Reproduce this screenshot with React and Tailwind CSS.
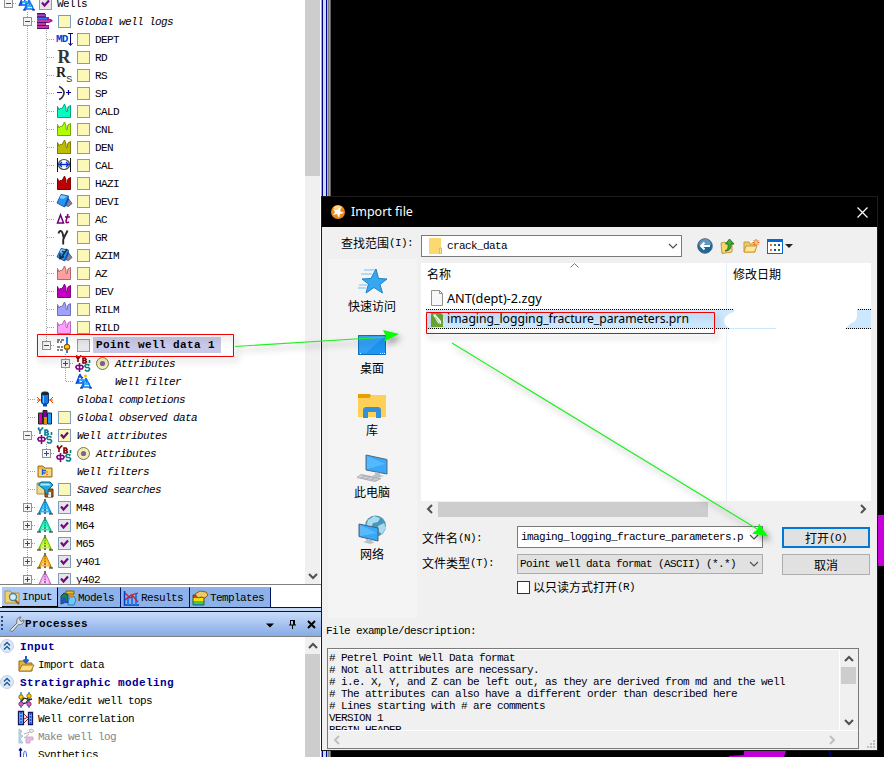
import React from "react";

const MONO = "font-['Liberation_Mono','Noto_Sans_CJK_SC',monospace] text-[11px] tracking-[-0.6px] whitespace-pre";
const MONO_BOLD = "font-['Liberation_Mono',monospace] font-bold text-[11px] tracking-[0.4px] whitespace-pre";
const CJK = "font-['Noto_Sans_CJK_SC',sans-serif] text-[12px] whitespace-pre";

/* ---------- tree icons (16 x 16) ---------- */

function Svg({ children, w = 16, h = 16 }) {
  return (
    <svg width={w} height={h} viewBox={`0 0 ${w} ${h}`} className="block shrink-0 overflow-visible">
      {children}
    </svg>
  );
}

function Spiky({ fill, stroke }) {
  return (
    <Svg>
      <path d="M1.500 14.500V3.500L3 7l1.500-2 1 1L7 4l1.500-3L10 5v3l1 1 1-5 2.500-1.500v12z" fill={fill} stroke={stroke} strokeWidth="1" />
    </Svg>
  );
}

function Derrick({ color, dark }) {
  return (
    <Svg>
      <path d="M8 4 14 14.500H2z" fill={color} opacity=".35" />
      <path d="M8 0v15" stroke="#111" strokeWidth="1.200" />
      <path d="M7.500 3 2 14.500M8.500 3l5.500 11.500" stroke={dark} strokeWidth="2" fill="none" />
      <path d="M5.500 7h5M4.500 9.500h7M3.500 12.500h9" stroke={color} strokeWidth="1.600" />
      <path d="M7.500 4 3.500 12.500M8.500 4l4 8.500" stroke={color} strokeWidth="1.200" fill="none" />
      <path d="M0 15h4M12 15h4" stroke="#111" />
    </Svg>
  );
}

function Derricks({ spark }) {
  return (
    <Svg w={17}>
      <path d="M5 1 1 11M5 1l4 10M2 7h7M3 4h4M2 10l6-6M1 10h8" stroke="#0a50e0" strokeWidth="1.400" fill="none" />
      <path d="M11 5 6 15M11 5l5 10M8 11h7M9 8h4M6 15l6-6M7 14h8" stroke="#0878f0" strokeWidth="1.400" fill="none" />
      <path d="M4 7h6M9 11h4" stroke="#35c0ff" strokeWidth="1.500" />
      <path d="M5 15h3M14 15h3" stroke="#001a70" />
      {spark && <path d="M10.500 1.500v3M9 3h3" stroke="#ffb800" strokeWidth="1.500" />}
    </Svg>
  );
}

function AttrIcon({ top }) {
  return (
    <Svg w={17} h={17}>
      <g fill="none" strokeWidth="1.600">
        <path d="M1 1l2 3M5.500 1 3 4v3M1 1h1.500M5 1h1.500" stroke={top} />
        <path d="M8 3v5h2.500l1-1-1-1.500H8h2l1-1-1-1.500z" stroke={top} />
        <path d="M14.500 5v3" stroke="#087f84" />
        <path d="M4.500 8v9M2 10.500h5l1 1v1l-1 1.500H2l-1-1.500v-1z" stroke="#80007f" />
        <path d="M14.500 10.500 13 9.500h-2l-1 1v1l1 1h2.500l1 1v1l-1 1.500h-2L10 15" stroke="#087f84" />
      </g>
    </Svg>
  );
}

function Prism({ arrow }) {
  return (
    <Svg w={17}>
      <path d="M12 5l4 5.500-3.500 3L8 12z" fill="#8080a0" stroke="#606078" />
      <path d="M5 1.500 12.500 3l-4 11L1 10z" fill="#2a93ec" stroke="#1560b8" />
      <path d="M5 2l6 1.500-4 2.500-3.500-1z" fill="#78caff" />
      <path d="M12.500 3.500l.5 3-3.500 7-1.500 0z" fill="#0b4fae" />
      {arrow && <path d="M11 2 5 11M4 6.500v5l4-2M6 4l3 2" stroke="#202830" strokeWidth="1.500" fill="none" />}
    </Svg>
  );
}

const LETTER = "w-4 h-4 shrink-0 leading-4 whitespace-nowrap";

const icons = {
  wells: <Derricks />,
  filter: <Derricks spark />,
  logs: (
    <Svg>
      <path d="M0 1h9v3h3v2h2l2 2-4 2H9v2h3v3H0z" fill="#a01898" />
      <path d="M0 2.500h8M0 5.500h10" stroke="#3878ff" strokeWidth="1.500" />
      <path d="M0 8h13M0 11h8M0 14h11" stroke="#f050b0" strokeWidth="1" />
      <path d="M0 .5h8M0 4h9M0 9.500h10M0 12.500h9M0 15.500h12" stroke="#501070" />
    </Svg>
  ),
  md: (
    <div className="flex h-4 w-[17px] shrink-0 items-center">
      <span className="w-[11px] font-['Liberation_Mono',monospace] text-[11px] leading-4 font-bold tracking-[-0.8px] text-[#0048d8]">MD</span>
      <svg width="5" height="15" viewBox="0 0 5 15" className="ml-px shrink-0">
        <path d="M0 1.500h5M2.500 1v12M.5 11l2 2.500 2-2.500" stroke="#000080" fill="none" />
      </svg>
    </div>
  ),
  r: <div className={`${LETTER} text-center font-['Liberation_Serif',serif] text-[18px] font-bold text-[#333]`}>R</div>,
  rs: (
    <div className={`${LETTER} flex font-['Liberation_Serif',serif] text-[14px] text-[#222]`}>
      <b className="-mt-0.5 font-bold">R</b>
      <span className="mt-1 font-['Liberation_Sans',sans-serif] text-[9px]">S</span>
    </div>
  ),
  sp: (
    <Svg>
      <path d="M3 1.500C5 2 8 5 8 8s-3 6-5 6.500" stroke="#333" strokeWidth="1.700" fill="none" />
      <path d="M1 7.500h5M10 7.500h5M12.500 5v5" stroke="#000090" strokeWidth="1.200" />
    </Svg>
  ),
  cald: <Spiky fill="#00ffc0" stroke="#00a080" />,
  cnl: <Spiky fill="#b0ff00" stroke="#70a800" />,
  den: <Spiky fill="#bcbc00" stroke="#7c7c00" />,
  cal: (
    <Svg>
      <path d="M1.500 1v14M14.500 1v14" stroke="#111" />
      <ellipse cx="8" cy="7.500" rx="5.500" ry="5" fill="none" stroke="#444" strokeWidth="1.200" />
      <path d="M4 7.500h8M6 5 3.500 7.500 6 10M10 5l2.500 2.500L10 10" stroke="#0030d8" strokeWidth="1.300" fill="none" />
    </Svg>
  ),
  hazi: <Spiky fill="#c00000" stroke="#800000" />,
  devi: <Prism />,
  ac: (
    <Svg>
      <path d="M1.500 12 4.500 4l3 8z" fill="none" stroke="#700078" strokeWidth="1.500" />
      <path d="M12 3l-2 7c0 2 1 2 3 1M9 6h5" fill="none" stroke="#880070" strokeWidth="1.600" />
    </Svg>
  ),
  gr: (
    <Svg>
      <path d="M2.500 4.500C3 1.500 5.500 1 6.500 4L8 10M11.500 1.500C10.500 5 7.500 8 7.200 11v4.500" fill="none" stroke="#282828" strokeWidth="1.900" />
    </Svg>
  ),
  azim: <Prism arrow />,
  az: <Spiky fill="#ffa0a0" stroke="#b06868" />,
  dev: <Spiky fill="#c000c0" stroke="#800080" />,
  rilm: <Spiky fill="#a0a0ff" stroke="#6c6cb8" />,
  rild: <Spiky fill="#ffa0ff" stroke="#b868b8" />,
  point: (
    <Svg>
      <path d="M1 3h3M5 3h3M1 5h2M4 5h2M1 10h3M5 10h2M1 13h2M4 13h3" stroke="#111" />
      <path d="M11 0v16" stroke="#0878f8" strokeWidth="1.800" />
      <circle cx="11" cy="10" r="2.800" fill="#ffc800" stroke="#7a4800" />
      <path d="M8.500 11a2.500 2.500 0 0 0 5 0" fill="#c07000" />
    </Svg>
  ),
  attrRed: <AttrIcon top="#800000" />,
  attrTeal: <AttrIcon top="#087f94" />,
  completion: (
    <Svg>
      <rect x="4.500" y="1" width="7" height="12" rx="2" fill="#1878e0" stroke="#083878" />
      <ellipse cx="8" cy="2.500" rx="3.500" ry="1.500" fill="#222" />
      <path d="M6.500 5v7" stroke="#70c8ff" />
      <path d="M0 6l3 3-3 3M16 6l-3 3 3 3M0 9h4M12 9h4" stroke="#f04000" fill="none" />
      <path d="M6 13h4v2.500H6z" fill="#0848b0" />
    </Svg>
  ),
  observed: (
    <Svg>
      <path d="M1.500 4h4v11h-4z" fill="#e000b0" stroke="#222" />
      <path d="M6 1.500h4V15H6z" fill="#8000b0" stroke="#222" />
      <path d="M7 8h3v7H7z" fill="#e09000" />
      <path d="M10.500 4h4v11h-4z" fill="#18a0f8" stroke="#222" />
    </Svg>
  ),
  folderFilter: (
    <Svg>
      <path d="M1 3h5l2 2h7v9H1z" fill="#e8b848" stroke="#a07020" />
      <path d="M2 6h12v7H2z" fill="#f8d880" />
      <path d="M5.500 6v6M5.500 7.500H9M5.500 10h3" stroke="#1060e0" strokeWidth="1.300" />
      <path d="M8 9h3M9 11.500h2" stroke="#f06820" />
    </Svg>
  ),
  saved: (
    <Svg w={17}>
      <path d="M0 2h5l2 2h6v9H0z" fill="#f0d890" stroke="#b09040" />
      <path d="M8 8h8v8H8z" fill="#a05c20" stroke="#603008" />
      <path d="M11 11h3v5h-3z" fill="#f0e8d8" />
      <path d="M1 3.500 4 1h9l3 3-5 5v5l-3-3V9z" fill="#20a8d8" stroke="#086890" />
      <path d="M4 2.500h8l2 2H3z" fill="#a8ecff" />
    </Svg>
  ),
  m48: <Derrick color="#28b8ff" dark="#087cc0" />,
  m64: <Derrick color="#20f0b8" dark="#08a880" />,
  m65: <Derrick color="#b8f820" dark="#74ac08" />,
  y401: <Derrick color="#ffb820" dark="#b87800" />,
  y402: <Derrick color="#ffa8ff" dark="#b060b8" />,
};

/* ---------- tree ---------- */

// guides: one character per indent column.
// " " empty, "|" passing line, "t" tee, "l" corner, "-" open node, "+" closed node,
// "m" open node at the end of its branch, "p" closed node at the end of its branch
const rows = [
  ["-", "wells", "v", "Wells", "n"],
  [" -", "logs", "y", "Global well logs", "i"],
  [" |t", "md", "y", "DEPT", "n"],
  [" |t", "r", "y", "RD", "n"],
  [" |t", "rs", "y", "RS", "n"],
  [" |t", "sp", "y", "SP", "n"],
  [" |t", "cald", "y", "CALD", "n"],
  [" |t", "cnl", "y", "CNL", "n"],
  [" |t", "den", "y", "DEN", "n"],
  [" |t", "cal", "y", "CAL", "n"],
  [" |t", "hazi", "y", "HAZI", "n"],
  [" |t", "devi", "y", "DEVI", "n"],
  [" |t", "ac", "y", "AC", "n"],
  [" |t", "gr", "y", "GR", "n"],
  [" |t", "azim", "y", "AZIM", "n"],
  [" |t", "az", "y", "AZ", "n"],
  [" |t", "dev", "y", "DEV", "n"],
  [" |t", "rilm", "y", "RILM", "n"],
  [" |t", "rild", "y", "RILD", "n"],
  [" |m", "point", "g", "Point well data 1", "b"],
  [" | +", "attrRed", "o", "Attributes", "i"],
  [" | l", "filter", "", "Well filter", "i"],
  [" t", "completion", "", "Global completions", "i"],
  [" t", "observed", "y", "Global observed data", "i"],
  [" -", "attrTeal", "x", "Well attributes", "i"],
  [" |p", "attrRed", "o", "Attributes", "i"],
  [" t", "folderFilter", "", "Well filters", "i"],
  [" t", "saved", "y", "Saved searches", "i"],
  [" +", "m48", "v", "M48", "n"],
  [" +", "m64", "v", "M64", "n"],
  [" +", "m65", "v", "M65", "n"],
  [" +", "y401", "v", "y401", "n"],
  [" +", "y402", "v", "y402", "n"],
];

function Guide({ kind, root }) {
  const line = "#a0a0a0";
  const box = "-+mp".includes(kind);
  const plus = kind === "+" || kind === "p";
  const end = kind === "l" || kind === "m" || kind === "p";
  return (
    <svg width="19" height="18" viewBox="0 0 19 18" className="block shrink-0" shapeRendering="crispEdges">
      {kind !== " " && !root && <path d={end ? "M9.500 0v9" : "M9.500 0v18"} stroke={line} strokeDasharray="1 1" />}
      {kind !== " " && kind !== "|" && <path d="M10 9.500h8" stroke={line} strokeDasharray="1 1" />}
      {box && (
        <g>
          <rect x="5.500" y="5.500" width="8" height="8" fill="#f4f4f4" stroke="#919191" />
          <path d={plus ? "M7 9.500h5M9.500 7v5" : "M7 9.500h5"} stroke="#30488c" />
        </g>
      )}
    </svg>
  );
}

function Check({ kind }) {
  if (!kind) return <span className="w-[13px] shrink-0" />;
  if (kind === "o")
    return (
      <Svg w={13} h={13}>
        <circle cx="6.500" cy="6.500" r="6" fill="#f2efb4" stroke="#77774c" />
        <circle cx="6.500" cy="6.500" r="2.600" fill="#86609a" />
      </Svg>
    );
  const bg = kind === "y" || kind === "x" ? "bg-[#fcf8b8]" : "bg-[#e6e6ea]";
  return (
    <span className={`block h-[13px] w-[13px] shrink-0 border border-[#7f9db9] ${bg}`}>
      {(kind === "v" || kind === "x") && (
        <svg width="11" height="11" viewBox="0 0 11 11" className="block">
          <path d="M2 4.500 4.500 7.500 9 2.500" fill="none" stroke="#740a80" strokeWidth="2.200" />
        </svg>
      )}
    </span>
  );
}

function TreeRow({ row }) {
  const [guides, icon, check, label, style] = row;
  return (
    <div className="flex h-[18px] shrink-0 items-center">
      {guides.split("").map((g, i) => (
        <Guide key={i} kind={g} root={guides.length === 1} />
      ))}
      <div className="w-[21px] shrink-0">{icons[icon]}</div>
      <Check kind={check} />
      {style === "b" ? (
        <span className={`${MONO_BOLD} ml-[3px] bg-[#c8c8e8] pr-1.5 pl-[3px] leading-4`}>{label}</span>
      ) : style === "i" ? (
        <span className={`${MONO} ml-1.5 pt-px leading-4 italic`}>{label}</span>
      ) : (
        <span className={`${MONO} ml-[5px] pt-px leading-4`}>{label}</span>
      )}
    </div>
  );
}

function Arrow({ dir, color = "#505050", thin }) {
  const d = { up: "M1 7l4-4 4 4", down: "M1 3l4 4 4-4", left: "M7 1 3 5l4 4", right: "M3 1l4 4-4 4" }[dir];
  return (
    <svg width="10" height="10" viewBox="0 0 10 10" className="block shrink-0">
      <path d={d} fill="none" stroke={color} strokeWidth={thin ? 1.2 : 2} />
    </svg>
  );
}

/* ---------- tabs and process list ---------- */

const tabs = [
  ["Input", "w-[56px]",
    <Svg key="a"><path d="M1 2h5l2 2h7v10H1z" fill="#f0d070" stroke="#b89038" /><circle cx="9" cy="8" r="3.500" fill="#d0f0ff" stroke="#4880a0" strokeWidth="1.300" /><path d="M11 11l4 4" stroke="#806030" strokeWidth="2" /></Svg>],
  ["Models", "w-[63px]",
    <Svg key="b"><path d="M6 1h8v3H6z" fill="#e8c030" stroke="#806000" /><path d="M4 3l4 2v8l-3-1-4 2V6z" fill="#18883c" stroke="#203870" /><path d="M1 9l4-2 2 5-4 2z" fill="#2050d0" /><path d="M9 8l5-2 2 4-2 5H8z" fill="#70c8f8" stroke="#2880c0" /><path d="M9 4h4v4H9z" fill="#c89020" /></Svg>],
  ["Results", "w-[69px]",
    <Svg key="c"><path d="M1.500 1v14H16" stroke="#0040c0" fill="none" strokeWidth="1.500" /><path d="M5 7v8M9 5v10M13 3v12" stroke="#2878f0" strokeWidth="2" /><path d="M2 3l5 5 3-2 5 6M2 10l6-5 7-2" fill="none" stroke="#c02030" strokeWidth="1.300" /></Svg>],
  ["Templates", "w-[81px]",
    <Svg key="d"><path d="M1 5h11v3H1z" fill="#e83020" /><path d="M1 8h11v3H1z" fill="#f8e000" /><path d="M1 11h11v2H1z" fill="#40c840" /><path d="M1 13h11v2H1z" fill="#30b0f0" /><path d="M1 5h11v10H1z" fill="none" stroke="#286028" /><path d="M3 4l5-3 6 1 2 3-3 3-4-1-3 1z" fill="#f0c868" stroke="#806020" /></Svg>],
];

const procIcons = {
  import: <Svg><path d="M1 5h5l1 2h7v8H1z" fill="#e8b038" stroke="#906818" /><path d="M4 9h12l-3 6H1z" fill="#ffdc80" stroke="#a07820" /><path d="M8 0v6M5.500 3.500 8 6.500l2.500-3" stroke="#2060c8" strokeWidth="2" fill="none" /></Svg>,
  tops: <Svg><path d="M3 0v16M11 0v16" stroke="#18a0e8" strokeWidth="1.500" /><path d="M3 10l3-4 3 1 2-3M3 12l5-1 2-3 4-1" stroke="#222" strokeWidth="1.300" fill="none" /><circle cx="3" cy="5" r="2.200" fill="#ffc800" stroke="#805000" strokeWidth=".8" /><circle cx="11" cy="4" r="2.200" fill="#ffc800" stroke="#805000" strokeWidth=".8" /><circle cx="3" cy="12" r="2.200" fill="#e060c0" stroke="#702060" strokeWidth=".8" /><circle cx="11" cy="12" r="2.200" fill="#e060c0" stroke="#702060" strokeWidth=".8" /></Svg>,
  corr: <Svg><path d="M.5 1.500h5v13h-5zM10.500 2.500h4v12h-4z" fill="#70b8ff" stroke="#101860" strokeWidth="1.300" /><path d="M3 2v12M12.500 3v11" stroke="#2048d0" strokeWidth="1.500" strokeDasharray="2 1" /><path d="M6 4l4 4M6 9l4-2M6 13l4-4" stroke="#a02020" /></Svg>,
  log: <Svg><g opacity=".5"><path d="M1 1l3 2-2 3 3 2-3 3 3 4H1z" fill="#60b8f0" stroke="#5888a0" /><path d="M6 6l9-3M6 10l5-4" stroke="#666" /><path d="M8 9h7v3h-3v3H8z" fill="#e070d0" stroke="#906090" /><path d="M11 2l3-1 2 2-3 2z" fill="#ddd" stroke="#777" /></g></Svg>,
  synth: <Svg><path d="M2.500 2v13M1 4.500 2.500 2.500 4 4.500" stroke="#101080" fill="none" strokeWidth="1.300" /><path d="M4 14c2 0 1-9 3-9s1 9 3 8 2 1 3 1" stroke="#3060e0" fill="none" /></Svg>,
};

function Section({ label }) {
  return (
    <div className="flex h-[18px] items-center">
      <svg width="14" height="14" viewBox="0 0 14 14" className="block shrink-0">
        <circle cx="7" cy="7" r="6.500" fill="#dce8f8" stroke="#c0d0e4" />
        <path d="M4 6.500l3-3 3 3M4 10.500l3-3 3 3" fill="none" stroke="#185890" strokeWidth="1.300" />
      </svg>
      <span className={`${MONO_BOLD} ml-1.5 pt-px leading-4 text-[#000090]`}>{label}</span>
    </div>
  );
}

function Process({ icon, label, dim }) {
  return (
    <div className={`flex h-[18px] items-center pl-[18px] ${dim ? "text-[#868686]" : ""}`}>
      {procIcons[icon]}
      <span className={`${MONO} ml-1 pt-px leading-4`}>{label}</span>
    </div>
  );
}

function LeftPanel() {
  return (
    <div className="flex h-full w-[321px] shrink-0 flex-col bg-white">
      <div className="flex h-[585px] shrink-0 border-b border-[#808080]">
        <div className="-ml-px flex w-[306px] shrink-0 flex-col overflow-hidden">
          <div className="-mt-1.5">
            {rows.map((r, i) => <TreeRow key={i} row={r} />)}
          </div>
        </div>
        <div className="flex w-[15px] flex-col items-center bg-[#f0f0f0]">
          <div className="h-[176px] w-full bg-[#cdcdcd]" />
          <div className="grow" />
          <div className="mb-[3px]"><Arrow dir="down" /></div>
        </div>
      </div>
      <div className="mt-[2px] flex h-5 shrink-0 pl-[2px]">
        {tabs.map(([label, w, icon], i) => (
          <div
            key={label}
            className={`flex h-5 items-center border-t pl-[2px] ${w} ${i === 0 ? "border-r border-b border-t-[#a9c9f8] border-r-black border-b-black bg-[#a9c9f8]" : "border-r border-t-[#8db2ea] border-r-[#001060] bg-[#8db2ea]"}`}
          >
            {icon}
            <span className={`${MONO} ml-[2px] leading-4`}>{label}</span>
          </div>
        ))}
      </div>
      <div className="h-[5px] shrink-0 border-y border-[#001070] bg-[#c4d8f4]" />
      <div className="flex h-[24px] shrink-0 items-center bg-linear-to-b from-[#c8dcfa] to-[#86abe5] pr-[5px]">
        <svg width="4" height="18" viewBox="0 0 4 18" className="block">
          <path d="M2 1v16" stroke="#304880" strokeWidth="2" strokeDasharray="2 2" />
        </svg>
        <div className="ml-[5px]">
          <Svg><path d="M1.500 13.500 8 7c-1-3 1-6 4-6l-1.500 2.500L12 5.500 15 4c0 3-3 5.500-5.500 4.500L4 15c-2 1-3.500-.5-2.500-1.500z" fill="#e0e0e0" stroke="#667080" /></Svg>
        </div>
        <span className={`${MONO_BOLD} leading-4`}>Processes</span>
        <div className="grow" />
        <svg width="8" height="5" viewBox="0 0 8 5" className="mt-[3px]"><path d="M0 .5h8L4 4.500z" /></svg>
        <svg width="9" height="10" viewBox="0 0 9 10" className="ml-[14px]"><path d="M2.500 1v5M6.500 1v5M2 1.500h5M1 6h7M4.500 6v4M5.500 1v5" stroke="#000" fill="none" /></svg>
        <svg width="9" height="9" viewBox="0 0 9 9" className="ml-[10px]"><path d="M1 1l7 7M8 1 1 8" stroke="#000" strokeWidth="2" /></svg>
      </div>
      <div className="flex h-[121px] shrink-0 overflow-hidden border-t border-[#808080]">
        <div className="w-[305px] shrink-0">
          <Section label="Input" />
          <Process icon="import" label="Import data" />
          <Section label="Stratigraphic modeling" />
          <Process icon="tops" label="Make/edit well tops" />
          <Process icon="corr" label="Well correlation" />
          <Process icon="log" label="Make well log" dim />
          <Process icon="synth" label="Synthetics" />
        </div>
        <div className="flex w-[15px] flex-col items-center bg-[#f0f0f0] pt-1">
          <Arrow dir="up" />
          <div className="mt-[3px] w-full grow bg-[#cdcdcd]" />
        </div>
      </div>
    </div>
  );
}

/* ---------- dialog ---------- */

const places = [
  ["快速访问",
    <svg key="p" width="32" height="32" viewBox="0 0 32 32"><path d="M20 3l2.500 9.500L31 13l-7 5.500L26.500 27 18 21.500 10 27l2.500-9L6 13l9-.5z" fill="#38a8ee" stroke="#1880c8" /><path d="M8 4h11M5 8h11M3 19h8M2 22h8" stroke="#70c4f4" /></svg>],
  ["桌面",
    <svg key="p" width="32" height="32" viewBox="0 0 32 32"><path d="M2 7h28v20H2z" fill="#1e96f4" /><path d="M2 7h28L10 25H2z" fill="#40aaf8" opacity=".6" /><path d="M2.500 7.500h27v19h-27z" fill="none" stroke="#1070b8" /><path d="M4 25.500h1M24 25.500h1M26 25.500h1M28 25.500h1" stroke="#fff" /></svg>],
  ["库",
    <svg key="p" width="32" height="32" viewBox="0 0 32 32"><path d="M2 5h28v22H2z" fill="#ffd058" /><path d="M2 4h12l1 2-2 2H2z" fill="#e4a000" /><path d="M7 28V19l2-2h14l2 2v9h-5v-6h-8v6z" fill="#3690d8" /></svg>],
  ["此电脑",
    <svg key="p" width="32" height="32" viewBox="0 0 32 32"><path d="M10 3l21 4.500V22L10 18z" fill="#38a8f8" stroke="#586878" /><path d="M11 4l19 8-19 5z" fill="#70c8ff" opacity=".5" /><path d="M19 20l5 1v2l4 1-5 1.500-7-1.500 3-1.500z" fill="#b8c0c8" /><path d="M5 22.500l20 4-6 3-18-4z" fill="#d8d8dc" stroke="#a0a0a8" strokeWidth=".8" /><path d="M4 25l17 3.500M6 23.500l17 3.500M9 23l-4 3.500M14 24l-4 3.500M19 25l-4 3.500" stroke="#a0a0a8" strokeWidth=".6" /></svg>],
  ["网络",
    <svg key="p" width="32" height="32" viewBox="0 0 32 32"><circle cx="19.500" cy="12" r="10.500" fill="#4a96b8" /><path d="M12 6l6-4 6 2-2 4-5 1-2 5-5-1zM22 12l6-3 2 5-4 6-3-2z" fill="#a8dcec" /><path d="M3 10l19 4v13L3 22.500z" fill="#38a8f8" stroke="#48607c" /><path d="M4 11l17 8-17 3z" fill="#80d0ff" opacity=".45" /><path d="M10 25l6 1v1.500l3 1-5 1.500-7-2 3-1z" fill="#b8c0c8" /></svg>],
];

const description = [
  "# Petrel Point Well Data format",
  "# Not all attributes are necessary.",
  "# i.e. X, Y, and Z can be left out, as they are derived from md and the well",
  "# The attributes can also have a different order than described here",
  "# Lines starting with # are comments",
  "VERSION 1",
  "BEGIN HEADER",
];

function Label({ zh, en }) {
  return (
    <span className="flex items-center leading-4">
      <span className={CJK}>{zh}</span>
      <span className={MONO}>{en}</span>
    </span>
  );
}

function LookIn() {
  return (
    <div className="flex h-[30px] shrink-0 items-center pt-2 pl-[19px]">
      <div className="-mt-1.5 w-20 shrink-0"><Label zh="查找范围" en="(I):" /></div>
      <div className="flex h-[22px] w-[261px] shrink-0 items-center border border-[#7a7a7a] bg-white pr-[3px] pl-[7px]">
        <svg width="13" height="16" viewBox="0 0 13 16" className="block"><path d="M0 0h12v10h1v6H0z" fill="#fbd870" /><path d="M10.500 10h2v6h-2z" fill="#f4e0a0" stroke="#d8a830" strokeWidth=".6" /></svg>
        <span className={`${MONO} ml-[5px] grow leading-4`}>crack_data</span>
        <Arrow dir="down" thin />
      </div>
      <svg width="16" height="16" viewBox="0 0 16 16" className="ml-[15px] block">
        <circle cx="8" cy="8" r="7.300" fill="#186898" stroke="#506880" />
        <path d="M2 7a6 6 0 0 1 12 0z" fill="#6098c0" />
        <path d="M13 8H4M7.500 4.500 4 8l3.500 3.500" fill="none" stroke="#fff" strokeWidth="2" />
      </svg>
      <svg width="15" height="16" viewBox="0 0 15 16" className="ml-[7px] block">
        <path d="M1 5l4-1 1 1h6v9l-10 1.500z" fill="#f8d870" stroke="#c89838" />
        <path d="M5 13c3-1 3.500-4 3-7H5.500L9.500 1 14 6h-3c.5 4-1.500 7-6 7z" fill="#38b038" stroke="#186018" strokeWidth=".8" />
      </svg>
      <svg width="17" height="16" viewBox="0 0 17 16" className="ml-[8px] block">
        <path d="M1 4h5l1 2h5v8H1z" fill="#f0c860" stroke="#c89838" />
        <path d="M3 8h11l-2.500 6H1z" fill="#ffe898" stroke="#c89838" />
        <path d="M13 1v7M9.500 4.500h7M10.500 2l5 5M15.500 2l-5 5" stroke="#f05820" />
        <circle cx="13" cy="4.500" r="1.500" fill="#ffd040" />
      </svg>
      <svg width="16" height="15" viewBox="0 0 16 15" className="ml-[7px] block" shapeRendering="crispEdges">
        <path d="M.5.5h15v14H.5z" fill="#fff" stroke="#0868d0" />
        <path d="M0 0h16v3H0z" fill="#0868d0" />
        <path d="M3 6h2M3 11h2" stroke="#e86840" strokeWidth="2" />
        <path d="M7 6h2M11 11h2" stroke="#208838" strokeWidth="2" />
        <path d="M11 6h2M7 11h2" stroke="#1848a0" strokeWidth="2" />
      </svg>
      <svg width="8" height="4" viewBox="0 0 8 4" className="ml-[2px] block"><path d="M0 0h8L4 4z" fill="#222" /></svg>
    </div>
  );
}

function FileList() {
  return (
    <div className="relative flex h-[254px] w-[450px] shrink-0 flex-col">
      <div className="flex h-[238px] bg-white">
        <div className="flex w-[306px] shrink-0 flex-col border-r border-[#e4eef8]">
          <div className="flex h-[24px] items-start">
            <span className={`${CJK} mt-[3px] ml-1.5 leading-4`}>名称</span>
            <svg width="9" height="5" viewBox="0 0 9 5" className="ml-[119px] block"><path d="M.5 4.500l4-4 4 4" fill="none" stroke="#777" /></svg>
          </div>
          <div className="flex h-[22px] items-center pl-2.5">
            <svg width="12" height="16" viewBox="0 0 12 16" className="block"><path d="M.5.5h8l3 3v12H.5z" fill="#f7f7f7" stroke="#909090" /><path d="M8.500.5v3h3" fill="none" stroke="#909090" /></svg>
            <span className="ml-1 font-['Noto_Sans',sans-serif] text-[12.7px] leading-4 whitespace-pre">ANT(dept)-2.zgy</span>
          </div>
          <div className="z-10 -mr-[145px] ml-[5px] flex h-[20px] items-center border-y border-dotted border-black bg-[#cce8ff] pl-[5px]">
            <svg width="12" height="15" viewBox="0 0 12 15" className="block"><path d="M0 0h9l3 3v12H0z" fill="#66a830" /><path d="M2 3l2-1 6 7v3l-3-1z" fill="#fff" /><path d="M4 5l5 6" stroke="#a8c888" /></svg>
            <span className="ml-1 font-['Noto_Sans',sans-serif] text-[12.2px] leading-4 whitespace-pre">imaging_logging_fracture_parameters.prn</span>
          </div>
        </div>
        <span className={`${CJK} mt-[3px] ml-1.5 leading-4`}>修改日期</span>
      </div>
      {/* erased area over the date column */}
      <svg width="134" height="26" viewBox="0 0 134 26" className="absolute top-[43px] left-[303px] z-20 block">
        <path d="M10 0h123v11q-1 5-6 6l-6 6v3H7v-3Q0 20 0 14q2-6 10-8z" fill="#fff" />
        <path d="M6 22.500h46" stroke="#cce8ff" />
      </svg>
      <div className="flex h-4 items-center bg-[#f0f0f0] pl-1">
        <Arrow dir="left" />
        <div className="ml-[3px] h-[15px] w-[270px] bg-[#cdcdcd]" />
        <div className="grow" />
        <div className="mr-[3px]"><Arrow dir="right" /></div>
      </div>
    </div>
  );
}

function Fields() {
  return (
    <div className="flex pt-[9px]">
      <div className="flex w-[95px] shrink-0 flex-col pt-1 pl-px">
        <Label zh="文件名" en="(N):" />
        <div className="h-[9px]" />
        <Label zh="文件类型" en="(T):" />
      </div>
      <div className="flex w-[247px] shrink-0 flex-col pl-px">
        <div className="flex h-[22px] items-center overflow-hidden border border-[#7a7a7a] bg-white pr-[3px] pl-[3px]">
          <span className={`${MONO} grow leading-4`}>imaging_logging_fracture_parameters.p</span>
          <Arrow dir="down" thin />
        </div>
        <div className="mt-1.5 flex h-5 items-center border border-[#acacac] bg-[#e1e1e1] pr-[3px] pl-[2px]">
          <span className={`${MONO} grow leading-4`}>Point well data format (ASCII) (*.*)</span>
          <Arrow dir="down" thin />
        </div>
        <div className="mt-1 flex h-[18px] items-center">
          <span className="mr-[3px] block h-[13px] w-[13px] border border-[#333] bg-white" />
          <Label zh="以只读方式打开" en="(R)" />
        </div>
      </div>
      <div className="ml-[19px] flex w-[88px] flex-col pt-px">
        <div className="flex h-[21px] items-center justify-center border-2 border-[#0078d7] bg-[#e1e1e1]"><Label zh="打开" en="(O)" /></div>
        <div className="mt-1.5 flex h-[21px] items-center justify-center border border-[#adadad] bg-[#e1e1e1]"><Label zh="取消" en="" /></div>
      </div>
    </div>
  );
}

function Dialog() {
  return (
    <div className="absolute top-[196px] left-[321px] flex h-[555px] w-[557px] flex-col border border-[#1c1c1c] bg-[#f0f0f0]">
      <div className="flex h-[30px] shrink-0 items-center bg-black pr-[5px] pl-[9px]">
        <svg width="14" height="14" viewBox="0 0 14 14" className="block">
          <circle cx="7" cy="7" r="7" fill="#f08818" />
          <path d="M2 3a6 6 0 0 1 9-1L8 6z" fill="#ffd880" />
          <path d="M2 4l4 1 4-3-1 4 4 2-4 1-1 4-2-4-4 1 2-3z" fill="#fff" />
        </svg>
        <span className="ml-[6px] grow font-['Noto_Sans',sans-serif] text-[12.5px] leading-4 text-white">Import file</span>
        <svg width="11" height="11" viewBox="0 0 11 11" className="mr-[4px] block"><path d="M.5.5l10 10M10.500.5l-10 10" stroke="#fff" strokeWidth="1.200" /></svg>
      </div>
      <LookIn />
      <div className="flex h-[364px] shrink-0">
        <div className="mt-[2px] ml-1.5 flex h-[359px] w-[89px] shrink-0 flex-col items-center bg-[#f4f4f4] pt-[7px] pr-px">
          {places.map(([name, icon]) => (
            <div key={name} className="flex h-[62px] shrink-0 flex-col items-center">
              {icon}
              <span className={`${CJK} leading-4`}>{name}</span>
            </div>
          ))}
        </div>
        <div className="ml-1 flex flex-col pt-1.5">
          <FileList />
          <Fields />
        </div>
      </div>
      <div className="h-[27px] shrink-0 pl-1">
        <span className={`${MONO} block pt-[2px] leading-4`}>File example/description:</span>
      </div>
      <div className="ml-[5px] flex h-[101px] w-[532px] shrink-0 flex-col border border-[#7a7a7a]">
        <div className="flex h-[82px] border-b border-white">
          <div className="w-[512px] shrink-0 overflow-hidden border-t border-r border-white pt-[2px] pl-px">
            {description.map((t) => (
              <div key={t} className={`${MONO} h-3 leading-3`}>{t}</div>
            ))}
          </div>
          <div className="flex w-[17px] flex-col items-center pt-[5px]">
            <Arrow dir="up" />
            <div className="mt-[3px] h-[17px] w-[15px] bg-[#cdcdcd]" />
            <div className="grow" />
            <div className="mb-[3px]"><Arrow dir="down" /></div>
          </div>
        </div>
        <div className="flex h-[17px] items-center justify-between pr-[21px] pl-1">
          <Arrow dir="left" color="#bfbfbf" />
          <Arrow dir="right" color="#bfbfbf" />
        </div>
      </div>
      <svg width="8" height="8" viewBox="0 0 8 8" className="absolute right-[2px] bottom-[2px] block">
        <path d="M6 0h2v2H6zM3 3h2v2H3zM6 3h2v2H6zM0 6h2v2H0zM3 6h2v2H3zM6 6h2v2H6z" fill="#bfbfbf" />
      </svg>
    </div>
  );
}

/* ---------- annotations drawn across the windows ---------- */

function Annotations() {
  return (
    <svg width="884" height="757" viewBox="0 0 884 757" className="pointer-events-none absolute top-0 left-0 z-30 block drop-shadow-[3px_4px_3px_rgba(0,0,0,0.4)]">
      <path d="M37.500 334.500h196v22h-196zM426.500 312.500h288v21h-288z" fill="none" stroke="#f00000" />
      <path d="M235 346.500l152-9.500M452 343l306 186.500" stroke="#20f020" strokeWidth="1.200" fill="none" />
      <path d="M399 334l-16-4 3 6.500-2 5zM768 536.500l-9-13-1.500 6-5.500 4z" fill="#00ff00" />
    </svg>
  );
}

export default function App() {
  return (
    <div className="relative flex h-[757px] w-[884px] overflow-hidden bg-black text-black">
      <LeftPanel />
      <div className="flex h-full w-[10px] shrink-0">
        <div className="w-px bg-[#a8a8a8]" />
        <div className="w-px bg-[#000080]" />
        <div className="w-[3px] bg-[#c4dcfc]" />
        <div className="w-px bg-[#000080]" />
        <div className="w-px bg-[#b4b4b4]" />
        <div className="w-px bg-[#808080]" />
        <div className="w-px bg-[#a0a0a0]" />
        <div className="w-px bg-[#606060]" />
      </div>
      <svg width="553" height="757" viewBox="331 0 553 757" className="block shrink-0">
        <path d="M878 515h6v51h-6z" fill="#c800dc" />
        <path d="M729 757v-1l15-1v-4h42l-2 6z" fill="#c000d4" />
        <path d="M829 751l2 6" stroke="#0000a0" strokeWidth="1.500" />
      </svg>
      <Dialog />
      <Annotations />
    </div>
  );
}
